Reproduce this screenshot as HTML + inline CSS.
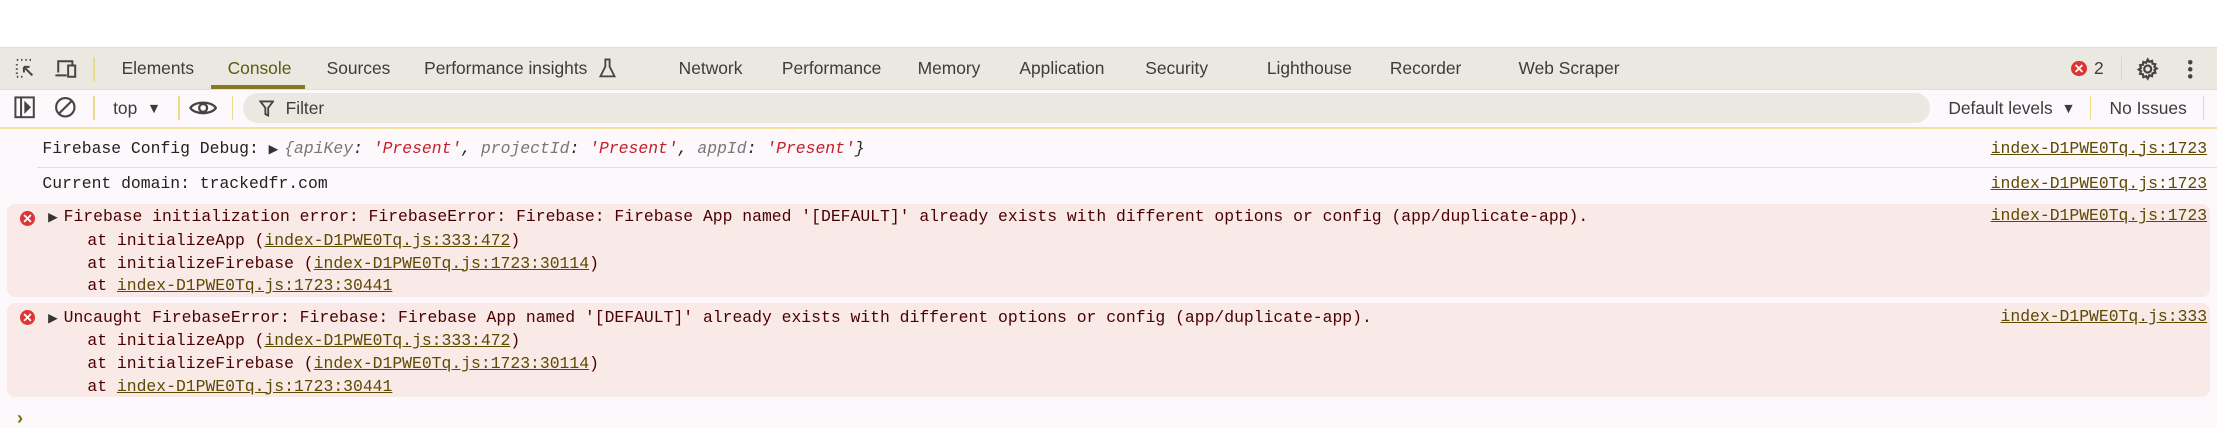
<!DOCTYPE html>
<html><head><meta charset="utf-8"><style>
html,body{margin:0;padding:0;background:#fff;overflow:hidden;width:2217px;height:428px}
#w{zoom:1.4139;width:1568px;height:303px;position:relative;font-family:"Liberation Sans",sans-serif;background:#fdf8fb}
.a{position:absolute;white-space:pre}
.tab{position:absolute;top:41px;font-size:12.3px;color:#3c3c3c}
.m{font-family:"Liberation Mono",monospace;font-size:11.6px}
.lk{color:#5c4a00;text-decoration:underline}
.err{position:absolute;left:5px;right:5px;background:#f9e9e7;border-radius:6px}
.ei{position:absolute;width:11px;height:11px;border-radius:50%;background:#dc3535;color:#fff;font-size:9px;line-height:11px;text-align:center;font-weight:bold}
.vs{position:absolute;width:1px;background:#ecdc8a}
.tri{display:inline-block;font-size:9px;color:#333;width:11px}
</style></head><body><div id="w">
<div class="a" style="left:0;top:0;width:1568px;height:33px;background:#fff;border-bottom:1px solid #f0e29a"></div>
<div class="a" style="left:0;top:34px;width:1568px;height:29px;background:#ebe8e1;border-bottom:1px solid #f0e29a"></div>
<svg class="a" style="left:10px;top:40px" width="16" height="16" viewBox="0 0 16 16" fill="none" stroke="#444" stroke-width="1.4"><path d="M2 2h1M5 2h1M8 2h1M11 2h1M2 5v1M2 8v1M2 11v1M2 14h1M5 14h1" /><path d="M7 7l6 6M7 7h4M7 7v4"/></svg>
<svg class="a" style="left:38px;top:40px" width="18" height="16" viewBox="0 0 18 16" fill="none" stroke="#444" stroke-width="1.4"><path d="M3 11V3h10v3M1 13h8"/><rect x="10" y="6" width="5" height="8"/></svg>
<div class="vs" style="left:66px;top:40px;height:17px"></div>
<div class="tab" style="left:86px">Elements</div>
<div class="tab" style="left:161px;color:#5f5a10">Console</div>
<div class="a" style="left:149px;top:60px;width:67px;height:3px;background:#857a22"></div>
<div class="tab" style="left:231px">Sources</div>
<div class="tab" style="left:300px">Performance insights</div>
<svg class="a" style="left:424px;top:41px" width="12" height="14" viewBox="0 0 12 14" fill="none" stroke="#444" stroke-width="1.3"><path d="M4 1h4M4.5 1v5L1 13h10L7.5 6V1"/></svg>
<div class="tab" style="left:480px">Network</div>
<div class="tab" style="left:553px">Performance</div>
<div class="tab" style="left:649px">Memory</div>
<div class="tab" style="left:721px">Application</div>
<div class="tab" style="left:810px">Security</div>
<div class="tab" style="left:896px">Lighthouse</div>
<div class="tab" style="left:983px">Recorder</div>
<div class="tab" style="left:1074px">Web Scraper</div>
<div class="ei" style="left:1465px;top:43px">✕</div>
<div class="tab" style="left:1481px">2</div>
<div class="vs" style="left:1500px;top:40px;height:17px"></div>
<svg class="a" style="left:1510px;top:40px" width="18" height="17" viewBox="0 0 24 24" fill="none" stroke="#444" stroke-width="2.2"><circle cx="12" cy="12" r="3.5"/><path d="M12 2.5l1.6 2.3 2.7-.9.5 2.8 2.8.5-.9 2.7 2.3 1.6-2.3 1.6.9 2.7-2.8.5-.5 2.8-2.7-.9L12 21.5l-1.6-2.3-2.7.9-.5-2.8-2.8-.5.9-2.7L3 12.5l2.3-1.6-.9-2.7 2.8-.5.5-2.8 2.7.9z"/></svg>
<svg class="a" style="left:1546px;top:41px" width="6" height="16"><circle cx="3" cy="3" r="1.6" fill="#444"/><circle cx="3" cy="8" r="1.6" fill="#444"/><circle cx="3" cy="13" r="1.6" fill="#444"/></svg>
<div class="a" style="left:0;top:90px;width:1568px;height:1px;background:#f0e29a"></div>
<svg class="a" style="left:10px;top:68px" width="15" height="16" viewBox="0 0 15 16" fill="none" stroke="#444" stroke-width="1.4"><rect x="1" y="1" width="13" height="14"/><path d="M5 1v14"/><path d="M8 5l3 3-3 3z" fill="#444"/></svg>
<svg class="a" style="left:38px;top:68px" width="16" height="16" viewBox="0 0 16 16" fill="none" stroke="#444" stroke-width="1.5"><circle cx="8" cy="8" r="6.5"/><path d="M3.5 12.5l9-9"/></svg>
<div class="vs" style="left:66px;top:68px;height:17px"></div>
<div class="tab" style="left:80px;top:69px">top</div>
<div class="tab" style="left:104px;top:71px;font-size:10px">▼</div>
<div class="vs" style="left:126px;top:68px;height:17px"></div>
<svg class="a" style="left:134px;top:69px" width="20" height="14" viewBox="0 0 20 14" fill="none" stroke="#444" stroke-width="1.6"><path d="M1 7C4 2 16 2 19 7C16 12 4 12 1 7z"/><circle cx="10" cy="7" r="2.8"/></svg>
<div class="vs" style="left:164px;top:68px;height:17px"></div>
<div class="a" style="left:172px;top:66px;width:1193px;height:21px;border-radius:11px;background:#ebe8e1"></div>
<svg class="a" style="left:183px;top:71px" width="11" height="12" viewBox="0 0 11 12" fill="none" stroke="#444" stroke-width="1.3"><path d="M1 1h9L6.5 5.5V11L4.5 10V5.5z"/></svg>
<div class="tab" style="left:202px;top:69px">Filter</div>
<div class="tab" style="left:1378px;top:69px">Default levels</div>
<div class="tab" style="left:1458px;top:71px;font-size:10px">▼</div>
<div class="vs" style="left:1478px;top:68px;height:17px"></div>
<div class="tab" style="left:1492px;top:69px">No Issues</div>
<div class="vs" style="left:1558px;top:68px;height:17px"></div>
<div class="a m" style="left:30px;top:98px;color:#222">Firebase Config Debug: <span class="tri">▶</span><i><span style="color:#777">{apiKey</span>: <span style="color:#c4202a">'Present'</span>, <span style="color:#777">projectId</span>: <span style="color:#c4202a">'Present'</span>, <span style="color:#777">appId</span>: <span style="color:#c4202a">'Present'</span>}</i></div>
<div class="a m lk" style="right:7px;top:98px">index-D1PWE0Tq.js:1723</div>
<div class="a" style="left:26px;top:118px;width:1542px;height:1px;background:#f0e29a"></div>
<div class="a m" style="left:30px;top:123px;color:#222">Current domain: trackedfr.com</div>
<div class="a m lk" style="right:7px;top:123px">index-D1PWE0Tq.js:1723</div>
<div class="err" style="top:144px;height:66px"></div>
<div class="ei" style="left:14px;top:149px">✕</div>
<div class="a m" style="left:34px;top:146px;color:#4a0000;line-height:16px"><span class="tri">▶</span>Firebase initialization error: FirebaseError: Firebase: Firebase App named '[DEFAULT]' already exists with different options or config (app/duplicate-app).
    at initializeApp (<span class="lk">index-D1PWE0Tq.js:333:472</span>)
    at initializeFirebase (<span class="lk">index-D1PWE0Tq.js:1723:30114</span>)
    at <span class="lk">index-D1PWE0Tq.js:1723:30441</span></div>
<div class="a m lk" style="right:7px;top:146px">index-D1PWE0Tq.js:1723</div>
<div class="err" style="top:214px;height:67px"></div>
<div class="ei" style="left:14px;top:219px">✕</div>
<div class="a m" style="left:34px;top:217px;color:#4a0000;line-height:16px"><span class="tri">▶</span>Uncaught FirebaseError: Firebase: Firebase App named '[DEFAULT]' already exists with different options or config (app/duplicate-app).
    at initializeApp (<span class="lk">index-D1PWE0Tq.js:333:472</span>)
    at initializeFirebase (<span class="lk">index-D1PWE0Tq.js:1723:30114</span>)
    at <span class="lk">index-D1PWE0Tq.js:1723:30441</span></div>
<div class="a m lk" style="right:7px;top:217px">index-D1PWE0Tq.js:333</div>
<div class="a" style="left:12px;top:288px;color:#7a6d10;font-size:13px;font-weight:bold">›</div>
</div></body></html>
